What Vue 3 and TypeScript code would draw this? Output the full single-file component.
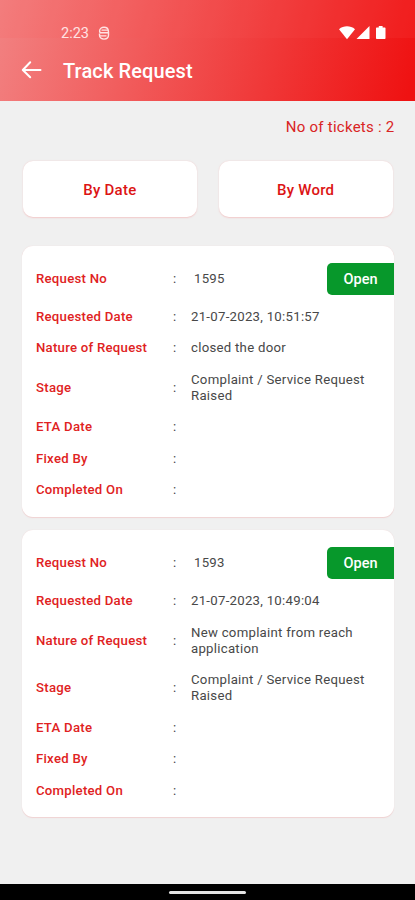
<script setup lang="ts">
interface Row {
  label: string
  value: string
}
interface Ticket {
  no: string
  status: string
  rows: Row[]
}

const filters: string[] = ['By Date', 'By Word']

const tickets: Ticket[] = [
  {
    no: '1595',
    status: 'Open',
    rows: [
      { label: 'Requested Date', value: '21-07-2023, 10:51:57' },
      { label: 'Nature of Request', value: 'closed the door' },
      { label: 'Stage', value: 'Complaint / Service Request Raised' },
      { label: 'ETA Date', value: '' },
      { label: 'Fixed By', value: '' },
      { label: 'Completed On', value: '' },
    ],
  },
  {
    no: '1593',
    status: 'Open',
    rows: [
      { label: 'Requested Date', value: '21-07-2023, 10:49:04' },
      { label: 'Nature of Request', value: 'New complaint from reach application' },
      { label: 'Stage', value: 'Complaint / Service Request Raised' },
      { label: 'ETA Date', value: '' },
      { label: 'Fixed By', value: '' },
      { label: 'Completed On', value: '' },
    ],
  },
]
</script>

<template>
  <div class="screen">
    <header class="header">
      <div class="status">
        <span class="time">2:23</span>
        <svg class="app-icon" width="12" height="14" viewBox="0 0 12 14" fill="none" stroke="#ffe3e3" stroke-width="1.4">
          <path d="M10.400 6.500V5C10.200 2.600 8.400 1.300 6 1.300S1.600 2.800 1.600 4.900c0 1.200.7 1.900 1.900 1.900H10.500v2.300c0 2.500-1.900 4-4.500 4s-4.500-1.500-4.500-4V7.500" />
          <path d="M3.500 4.200h6.500M2 9.800h6.500" stroke-width="1.200" />
        </svg>
        <svg class="signals" width="48" height="16" viewBox="0 0 48 16" fill="#fff">
          <path d="M0 4.200C4.600.4 11.400.4 16 4.200L8 14.200z" />
          <path d="M30.500 1v13H17.500z" />
          <path d="M39.800 1h3.800v1.500h2.200q.7 0 .7.700v10.100q0 .7-.7.700h-8.100q-.7 0-.7-.7V3.200q0-.7.700-.7h2.100z" />
        </svg>
      </div>
      <div class="bar">
        <svg class="back" width="22" height="20" viewBox="0 0 22 20" fill="none" stroke="#fff" stroke-width="2" stroke-linecap="round" stroke-linejoin="round">
          <path d="M19.500 10H2M9.200 2.200L1.800 10l7.400 7.300" />
        </svg>
        <h1 class="title">Track Request</h1>
      </div>
    </header>

    <main class="content">
      <p class="count">No of tickets : 2</p>
      <div class="filters">
        <button v-for="f in filters" :key="f" class="filter">{{ f }}</button>
      </div>
      <section v-for="t in tickets" :key="t.no" class="card">
        <div class="row first">
          <span class="label">Request No</span>
          <span class="colon">:</span>
          <span class="value">{{ t.no }}</span>
          <span class="badge">{{ t.status }}</span>
        </div>
        <div v-for="r in t.rows" :key="r.label" class="row">
          <span class="label">{{ r.label }}</span>
          <span class="colon">:</span>
          <span class="value">{{ r.value }}</span>
        </div>
      </section>
    </main>

    <footer class="nav"><span class="pill"></span></footer>
  </div>
</template>

<style>
body {
  margin: 0;
}
</style>

<style scoped>
.screen {
  width: 415px;
  height: 900px;
  display: flex;
  flex-direction: column;
  overflow: hidden;
  background: #f0f0f0;
  font-family: Roboto, "Liberation Sans", sans-serif;
}
.header {
  height: 100.500px;
  flex: none;
  background: linear-gradient(105deg, #f28282 0%, #ef1212 98%);
}
.status {
  box-sizing: border-box;
  height: 38px;
  padding: 25px 28px 0 61px;
  display: flex;
  align-items: flex-start;
  background: rgba(255, 90, 90, 0.12);
}
.time {
  padding-top: 1px;
  font-size: 14.500px;
  line-height: 16px;
  color: #ffe3e3;
}
.app-icon {
  margin: 1px 0 0 9px;
}
.signals {
  margin-left: auto;
}
.bar {
  height: 62px;
  padding-left: 21px;
  display: flex;
  align-items: center;
}
.back {
  margin-top: 1px;
}
.title {
  margin: 3px 0 0 20px;
  font-size: 20px;
  line-height: 24px;
  font-weight: 500;
  letter-spacing: 0.120px;
  color: #fff;
}
.content {
  flex: 1;
  padding: 0 21px 0 21.500px;
}
.count {
  margin: 17px -0.500px 24.500px 0;
  font-size: 15px;
  line-height: 19px;
  letter-spacing: 0.250px;
  text-align: right;
  color: #d92424;
}
.filters {
  display: flex;
  gap: 22px;
  padding: 0 1.500px;
  margin-bottom: 29px;
}
.filter {
  flex: 1;
  height: 56px;
  padding: 2px 0 0;
  border: 0;
  border-radius: 10px;
  background: #fff;
  box-shadow: 0 0.500px 1.500px rgba(245, 130, 130, 0.35);
  font: 500 15px Roboto, "Liberation Sans", sans-serif;
  letter-spacing: 0.250px;
  color: #dc1414;
}
.card {
  box-sizing: border-box;
  padding: 10.500px 0;
  margin-bottom: 13.400px;
  border-radius: 11px;
  background: #fff;
  box-shadow: 0 0.500px 1px rgba(240, 120, 120, 0.25);
}
.row {
  display: flex;
  align-items: center;
  padding: 7.750px 0 7.750px 14.500px;
  font-size: 13.200px;
  line-height: 16px;
  min-height: 16px;
}
.row.first {
  height: 44.700px;
  padding-top: 0;
  padding-bottom: 0;
}
.label {
  width: 137px;
  font-weight: 500;
  letter-spacing: 0.250px;
  color: #e02222;
}
.colon {
  width: 18px;
  color: #444;
}
.value {
  width: 185px;
  letter-spacing: 0.270px;
  color: #484848;
}
.first .value {
  width: 133px;
  padding-left: 3px;
}
.badge {
  box-sizing: border-box;
  margin-left: auto;
  width: 67px;
  height: 31.500px;
  border-radius: 5px 0 0 5px;
  background: #07982b;
  color: #fff;
  font-size: 14.500px;
  font-weight: 500;
  line-height: 33px;
  text-align: center;
}
.nav {
  box-sizing: border-box;
  height: 16px;
  padding-top: 1px;
  flex: none;
  display: flex;
  align-items: center;
  justify-content: center;
  background: #000;
}
.pill {
  width: 77px;
  height: 3px;
  border-radius: 2px;
  background: #e4e4e4;
}
</style>
